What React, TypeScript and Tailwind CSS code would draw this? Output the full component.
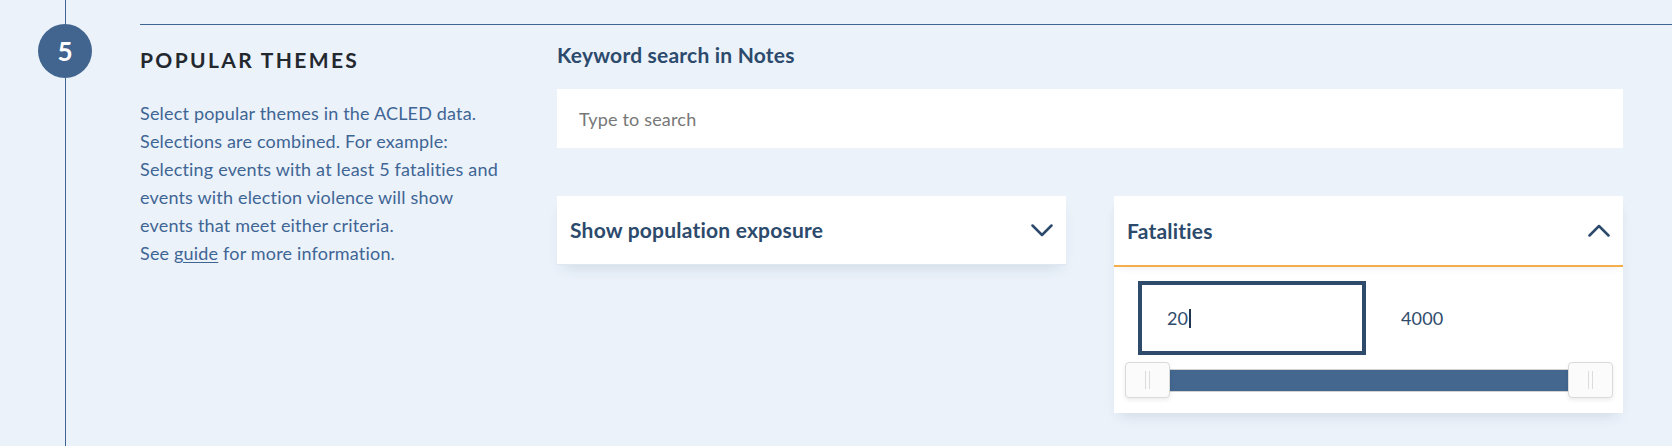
import React from 'react';

const Chevron = ({ up = false }: { up?: boolean }) => (
  <svg width="22" height="13" viewBox="0 0 22 13" fill="none" className={up ? 'rotate-180' : ''}>
    <polyline points="1.5,1.5 11,11 20.5,1.5" stroke="#2c4a6c" strokeWidth="2.5" strokeLinecap="round" strokeLinejoin="round" />
  </svg>
);

const Handle = ({ side }: { side: 'left' | 'right' }) => (
  <div
    className={`absolute top-0 flex h-[36px] w-[45px] items-center justify-center gap-[3px] rounded-[4px] border border-[#dadada] bg-[#fbfbfb] shadow-[0_2px_4px_rgba(0,0,0,0.08)] ${
      side === 'left' ? 'left-0' : 'right-0'
    }`}>
    <span className="h-[18px] w-px bg-[#dcdcdc]" />
    <span className="h-[18px] w-px bg-[#dcdcdc]" />
  </div>
);

const FatalitiesCard = () => {
  return (
    <div className="bg-white shadow-[0_8px_14px_-6px_rgba(30,50,80,0.14)]">
      <div className="relative flex h-[71px] items-center justify-between border-b-2 border-[#f4ad4b] px-[13px] shadow-[0_5px_8px_-4px_rgba(0,0,0,0.07)]">
        <span className="text-[21px] font-bold tracking-[0.01em] text-[#2c4a6c]">Fatalities</span>
        <Chevron up />
      </div>
      <div className="pb-[15px] pl-[11px] pr-[10px] pt-[14px]">
        <div className="flex items-center pl-[13px] text-[18px] tracking-[0.01em] text-[#2f4b6c]">
          <div className="flex h-[74px] w-[228px] items-center border-4 border-[#2f4b6c] pl-[25px]">
            20
            <span className="ml-px h-[19px] w-[2px] bg-[#22364f]" />
          </div>
          <span className="ml-[35px]">4000</span>
        </div>
        {/* range slider */}
        <div className="relative mt-[7px] h-[36px]">
          <div className="absolute inset-x-0 top-[7px] h-[23px] border border-[#d2d2d2] bg-[#43678f]" />
          <Handle side="left" />
          <Handle side="right" />
        </div>
      </div>
    </div>
  );
};

export default function App() {
  return (
    <div className="flex h-[446px] w-full overflow-hidden bg-[#ebf2fa] font-['Lato',sans-serif]">
      {/* step marker */}
      <div className="ml-[38px] flex w-[54px] flex-col items-center">
        <div className="h-[24px] w-px bg-[#3f6592]" />
        <div className="flex h-[54px] w-[54px] items-center justify-center rounded-full bg-[#41658f] text-[26px] font-bold text-white">
          5
        </div>
        <div className="w-px flex-1 bg-[#3f6592]" />
      </div>

      <div className="ml-[48px] mt-[24px] flex flex-1 border-t border-[#3f6592]">
        <div className="w-[417px] shrink-0 pt-[22px]">
          <h2 className="text-[21px] font-bold uppercase leading-[1.2] tracking-[0.112em] text-[#23272e]">
            Popular themes
          </h2>
          <p className="mt-[27px] text-[18px] leading-[28px] tracking-[0.01em] text-[#3f6594]">
            Select popular themes in the ACLED data.
            <br />
            Selections are combined. For example:
            <br />
            Selecting events with at least 5 fatalities and
            <br />
            events with election violence will show
            <br />
            events that meet either criteria.
            <br />
            See <a className="underline underline-offset-2">guide</a> for more information.
          </p>
        </div>

        <div className="flex-1 pr-[49px] pt-[18px]">
          <label className="block text-[21px] font-bold leading-[24px] tracking-[0.01em] text-[#2c4a6c]">
            Keyword search in Notes
          </label>
          <input
            type="text"
            placeholder="Type to search"
            className="mt-[22px] block h-[59px] w-full bg-white pl-[22px] text-[18px] tracking-[0.01em] text-[#2c4a6c] outline-none placeholder:text-[#777]"
          />

          <div className="mt-[48px] grid grid-cols-2 items-start gap-[48px]">
            <div className="flex h-[69px] items-center justify-between border-b border-[#dde7f2] bg-white px-[13px] shadow-[0_8px_14px_-6px_rgba(30,50,80,0.14)]">
              <span className="text-[21px] font-bold tracking-[0.01em] text-[#2c4a6c]">Show population exposure</span>
              <Chevron />
            </div>
            <FatalitiesCard />
          </div>
        </div>
      </div>
    </div>
  );
}
